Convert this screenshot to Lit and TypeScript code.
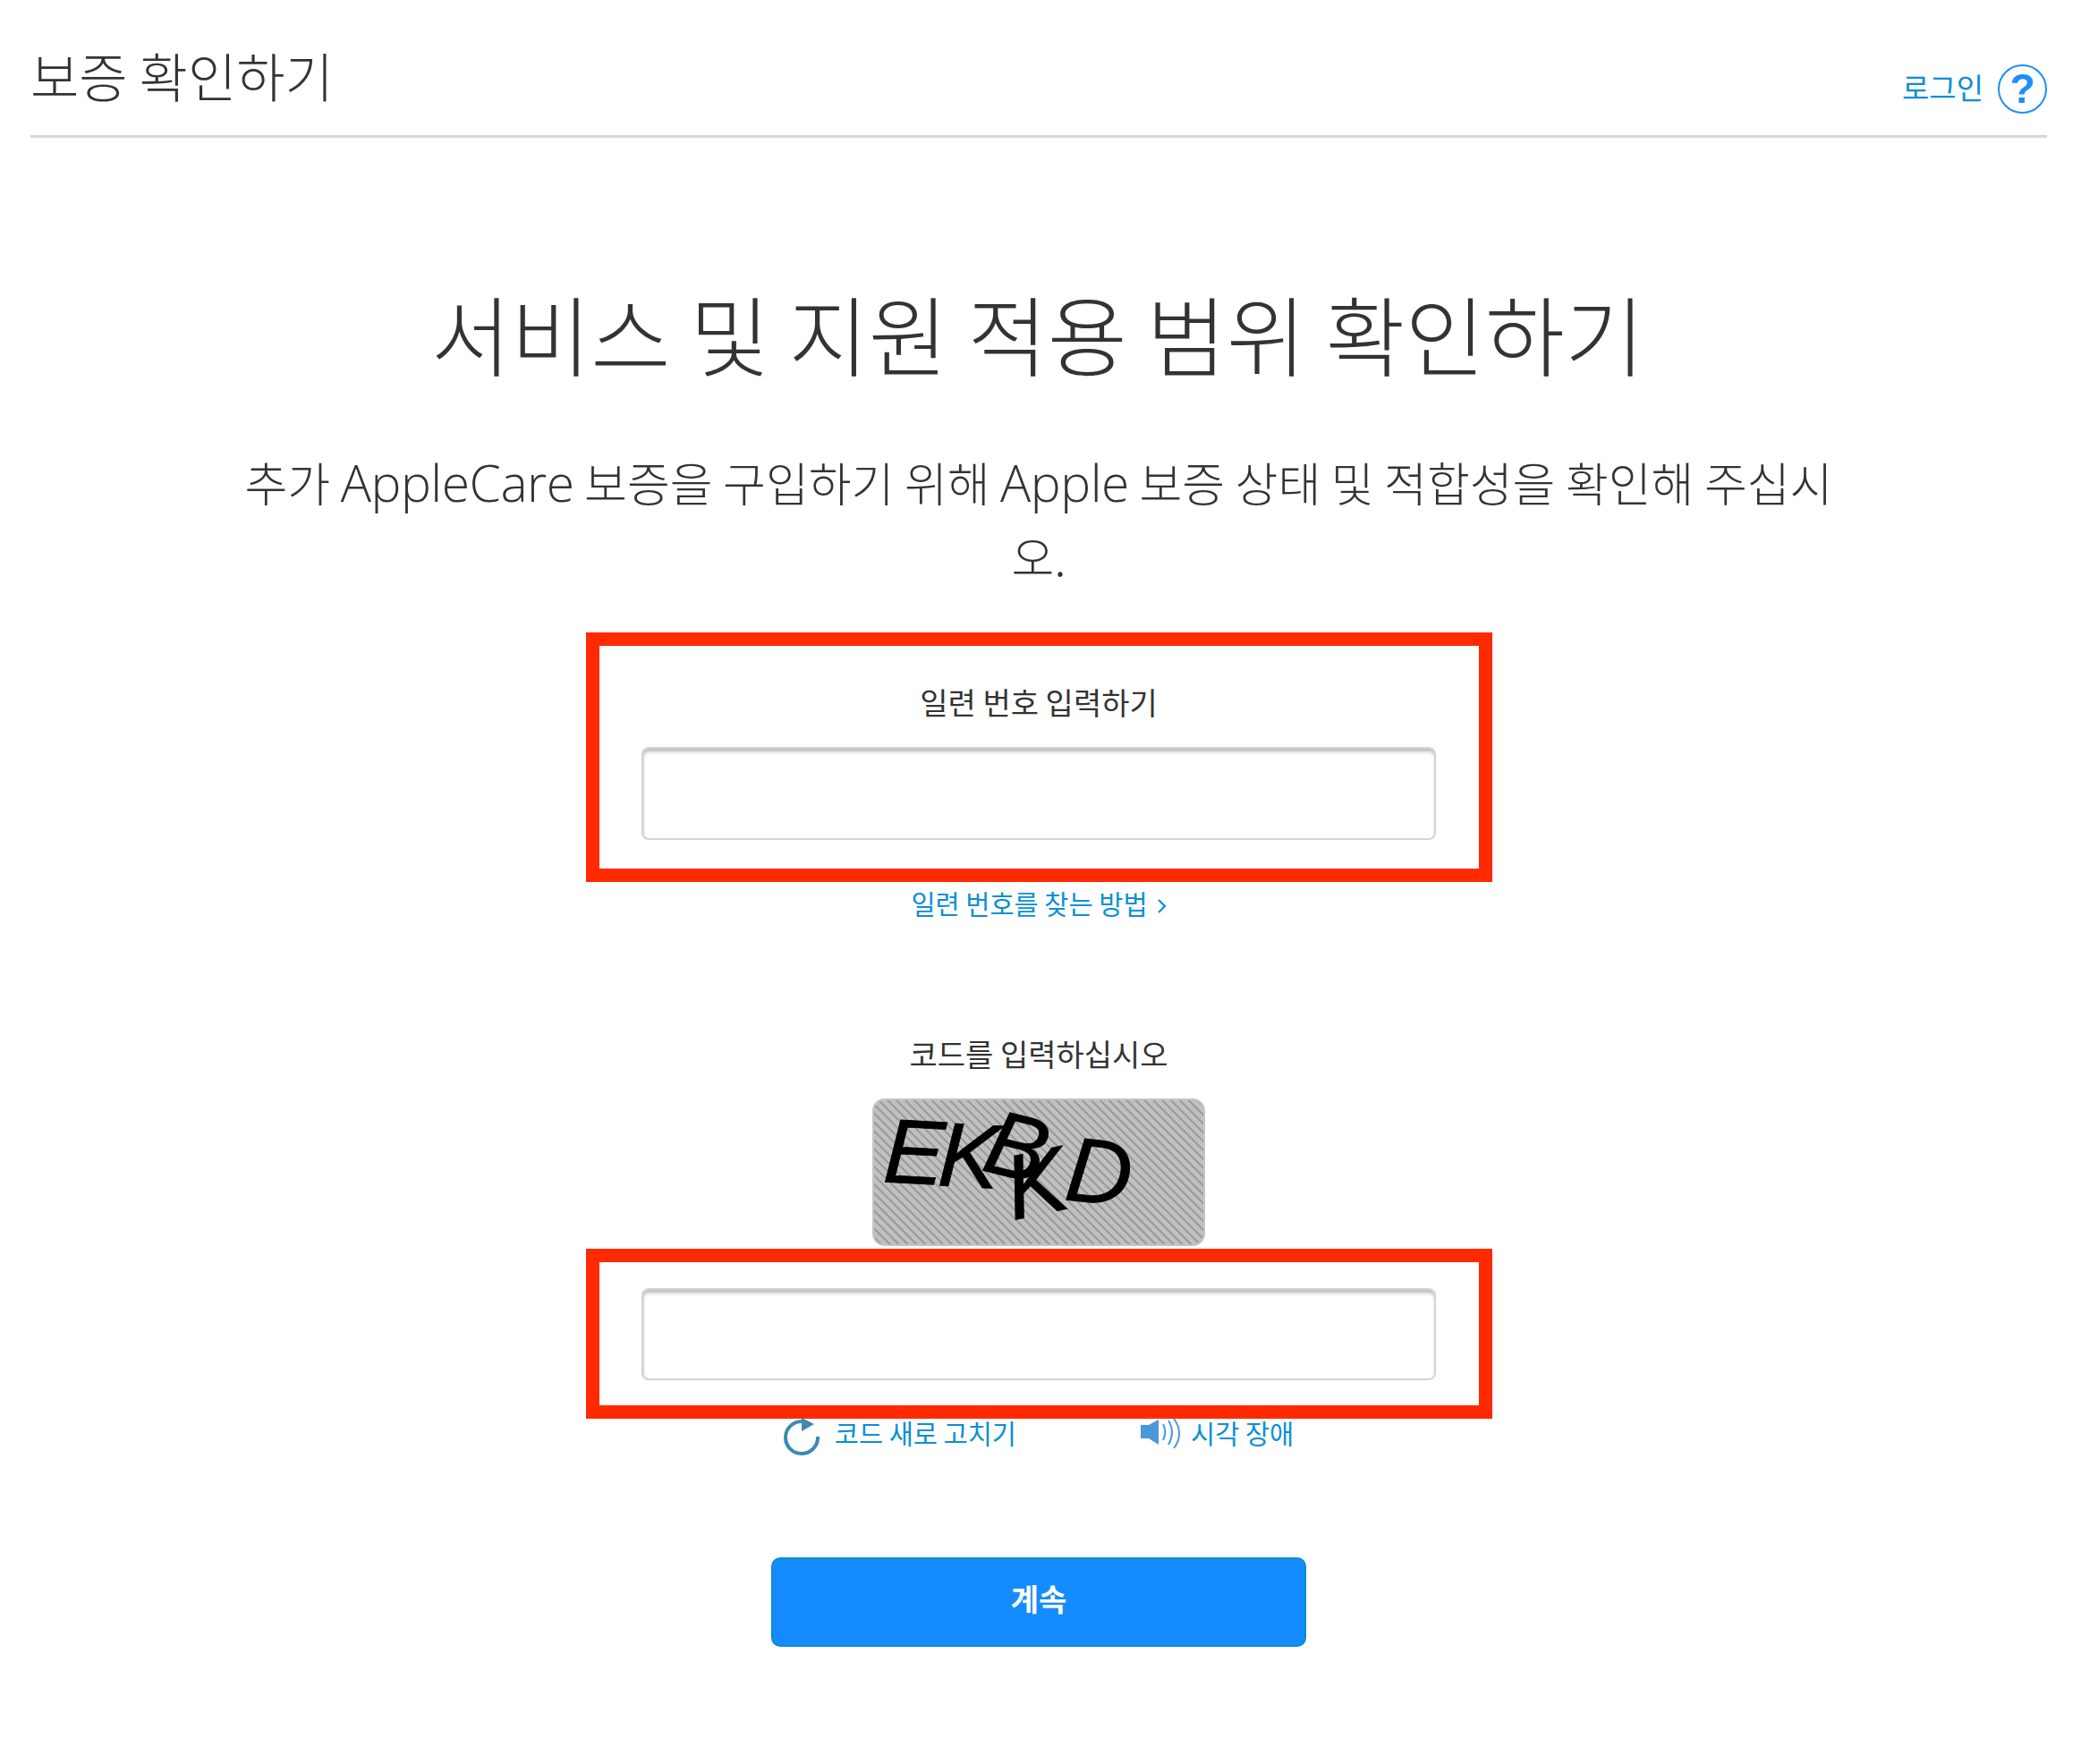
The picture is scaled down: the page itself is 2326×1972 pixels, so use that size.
import { LitElement, html, css } from "lit";
import { customElement } from "lit/decorators.js";

@customElement("app-root")
export class AppRoot extends LitElement {
  static styles = css`
    :host {
      display: block;
      width: 2326px;
      height: 1972px;
      background: #fff;
      font-family: "Noto Sans CJK KR", "Noto Sans", sans-serif;
      color: #333;
      overflow: hidden;
    }
    .page { width: 2254px; margin-left: 34px; display: flex; flex-direction: column; align-items: center; }
    header {
      align-self: stretch;
      height: 151px;
      border-bottom: 3px solid #d6d6d6;
      display: flex;
      justify-content: space-between;
    }
    .brand { font-size: 59px; font-weight: 300; line-height: 68px; margin-top: 50px; color: #333; }
    .top-right { display: flex; align-items: center; gap: 16px; height: 55px; margin-top: 72px; }
    .login { font-size: 33px; line-height: 48px; margin-bottom: 6px; color: #0a8fd6; }
    .help { display: block; width: 55px; height: 55px; }
    .help-mark { font-family: "Liberation Sans", sans-serif; font-weight: 700; font-size: 46px; fill: #1a8ffb; }
    h1 { margin: 157px 2px 0 0; font-size: 97px; font-weight: 300; line-height: 120px; color: #333; white-space: nowrap; }
    .sub { margin: 66px 0 0; font-size: 52px; font-weight: 300; line-height: 83px; text-align: center; white-space: nowrap; color: #333; }
    .sub .lat { font-family: "Open Sans", sans-serif; font-weight: 300; font-size: 57px; line-height: 1; letter-spacing: -0.5px; }
    .box { box-sizing: border-box; width: 1013px; border: 15px solid #ff2a00; display: flex; flex-direction: column; align-items: center; }
    .box1 { margin-top: 44px; height: 279px; padding-top: 43px; }
    .box2 { margin-top: 3px; height: 190px; padding-top: 29px; }
    .label { font-size: 34px; line-height: 40px; color: #333; white-space: nowrap; }
    .box1 .label { margin-bottom: 30px; }
    .field {
      box-sizing: border-box;
      width: 888px;
      height: 104px;
      border: 2px solid #d4d4d4;
      border-radius: 8px;
      box-shadow: inset 0 5px 4px -2px #b5b5b5, inset 2px 0 2px -1px #ddd;
      background: #fff;
      display: block;
      padding: 0;
      outline: none;
    }
    .box2 .field { height: 103px; }
    a { color: #0a8fd6; text-decoration: none; }
    .find { margin-top: 3px; font-size: 29.5px; line-height: 40px; white-space: nowrap; display: flex; align-items: center; gap: 10px; }
    .chev { display: block; width: 11px; height: 20px; margin-top: 8px; }
    .label2 { margin-top: 129px; }
    .captcha {
      margin-top: 30px;
      box-sizing: border-box;
      width: 372px;
      height: 165px;
      border: 2px solid #c4c4c4;
      border-radius: 14px;
      position: relative;
      background: repeating-linear-gradient(45deg, #c0c0c0 0 4px, #989898 5px 6px, #c0c0c0 7px);
    }
    .ch { position: absolute; font-family: "Liberation Sans", sans-serif; font-style: italic; font-size: 102px; line-height: 102px; color: #000; -webkit-text-stroke: 0.8px #000; }
    .c1 { left: 11px; top: 7px; transform: rotate(3deg); }
    .c2 { left: 72px; top: 11px; transform: rotate(3deg); }
    .c3 { left: 126px; top: 1px; transform: rotate(14deg); }
    .c4 { left: 147px; top: 42px; transform: rotate(-12deg); }
    .c5 { left: 215px; top: 29px; transform: rotate(6deg); }
    .actions { display: flex; align-items: flex-start; gap: 139px; margin-top: 0; height: 42px; }
    .action { display: flex; align-items: flex-start; font-size: 29.5px; line-height: 30px; white-space: nowrap; }
    .refresh { display: block; width: 40px; height: 41px; margin-right: 17px; }
    .speaker { display: block; width: 46px; height: 34px; margin-right: 10px; overflow: visible; }
    .go {
      margin-top: 113px;
      box-sizing: border-box;
      width: 598px;
      height: 100px;
      border: 2px solid #0a8ccc;
      border-radius: 10px;
      background: #148cff;
      color: #fff;
      font-family: inherit;
      font-size: 34px;
      font-weight: 700;
      padding: 0 0 9px;
    }
  `;

  render() {
    return html`
      <div class="page">
        <header>
          <div class="brand">보증 확인하기</div>
          <div class="top-right">
            <a class="login" href="#">로그인</a>
            <svg class="help" viewBox="0 0 55 55">
              <circle cx="27.5" cy="27.5" r="26.5" fill="none" stroke="#1a8ffb" stroke-width="2"/>
              <text class="help-mark" x="27.5" y="43" text-anchor="middle">?</text>
            </svg>
          </div>
        </header>
        <h1>서비스 및 지원 적용 범위 확인하기</h1>
        <p class="sub">추가 <span class="lat">AppleCare</span> 보증을 구입하기 위해 <span class="lat">Apple</span> 보증 상태 및 적합성을 확인해 주십시<br>오.</p>
        <div class="box box1">
          <div class="label">일련 번호 입력하기</div>
          <input class="field" type="text" aria-label="일련 번호 입력하기">
        </div>
        <a class="find" href="#">일련 번호를 찾는 방법
          <svg class="chev" viewBox="0 0 11 20"><path d="M2 3l7 7-7 7" fill="none" stroke="#0a8fd6" stroke-width="2.2"/></svg>
        </a>
        <div class="label label2">코드를 입력하십시오</div>
        <div class="captcha" role="img" aria-label="EKBKD">
          <span class="ch c1">E</span><span class="ch c2">K</span><span class="ch c3">B</span><span class="ch c4">K</span><span class="ch c5">D</span>
        </div>
        <div class="box box2">
          <input class="field" type="text" aria-label="코드를 입력하십시오">
        </div>
        <div class="actions">
          <a class="action" href="#">
            <svg class="refresh" viewBox="0 0 40 41">
              <path d="M38 20 A18 18 0 1 1 20 3" fill="none" stroke="#3b8ab0" stroke-width="4"/>
              <path d="M20 -1 L34 6 L20 14 Z" fill="#3b8ab0"/>
            </svg>
            코드 새로 고치기
          </a>
          <a class="action" href="#">
            <svg class="speaker" viewBox="0 0 46 34">
              <path d="M0 7h9L20 1v28L9 22H0Z" fill="#4a98d8"/>
              <g fill="none" stroke="#4a98d8" stroke-width="2">
                <path d="M25 6c3 6 3 12 0 18"/>
                <path d="M31 2c5 8 5 18 0 27"/>
                <path d="M37 0c8 10 8 23 0 33"/>
              </g>
            </svg>
            시각 장애
          </a>
        </div>
        <button class="go">계속</button>
      </div>
    `;
  }
}
